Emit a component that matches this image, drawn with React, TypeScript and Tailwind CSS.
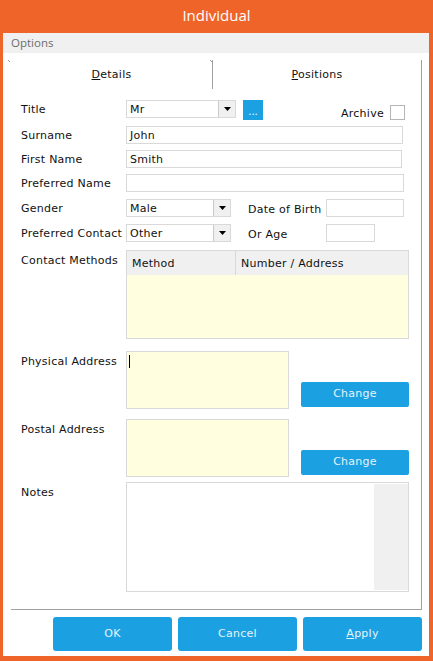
import React from "react";

const BLUE = "bg-[#1ba1e2]";

function Arrow() {
  return (
    <svg width="7" height="4" viewBox="0 0 7 4">
      <path d="M0 0h7L3.5 4z" fill="#000" />
    </svg>
  );
}

function Combo({ value, w }: { value: string; w: string }) {
  return (
    <div className={`flex h-[18px] ${w} border border-[#d9d9d9] bg-white`}>
      <div className="flex-1 pl-[3px] pt-[2px] leading-[14px] text-[#111]">{value}</div>
      <div className="w-[17px] border-l border-[#c9c9c9] bg-[#f0f0f0] flex items-center justify-center">
        <Arrow />
      </div>
    </div>
  );
}

function TextBox({ value = "", w }: { value?: string; w: string }) {
  return (
    <div className={`h-[18px] ${w} border border-[#d9d9d9] bg-white pl-[3px] pt-[2px] leading-[14px] text-[#111]`}>
      {value}
    </div>
  );
}

function Label({ text, top }: { text: string; top?: boolean }) {
  return (
    <div className={`w-[105px] shrink-0 text-[#111] whitespace-nowrap ${top ? "pt-[2px] leading-[18px]" : "pt-[2px] leading-[16px]"}`}>{text}</div>
  );
}

function Corner() {
  // little diagonal dots at the top of a tab edge
  return (
    <span className="absolute top-0 -left-[3px] block w-[3px] h-[2px]">
      <span className="absolute left-0 top-0 w-px h-px bg-[#a0a0a0]" />
      <span className="absolute left-px top-px w-px h-px bg-[#a0a0a0]" />
    </span>
  );
}

export default function App() {
  return (
    <div className="w-[433px] h-[661px] bg-[#ef6428] flex flex-col [font-family:'DejaVu_Sans',Verdana,sans-serif] text-[11px] tracking-[0.25px] overflow-hidden">
      {/* title bar */}
      <div className="h-[33px] shrink-0 flex items-center justify-center text-white text-[15px] tracking-normal [font-family:'Open_Sans',sans-serif] pb-[2px]">
        Individual
      </div>

      <div className="flex-1 ml-[3px] mr-[4px] mb-[5px] bg-white flex flex-col">
        {/* options strip */}
        <div className="h-[20px] shrink-0 bg-[#f0f0f0] pl-[8px] text-[11.5px] tracking-normal leading-[20px] text-[#6d6d6d] [font-family:'Open_Sans',sans-serif]">
          Options
        </div>

        {/* tab panel */}
        <div className="ml-[8px] mt-[7px] w-[411px] h-[550px] border-r border-b border-[#a0a0a0] flex flex-col relative">
          <Corner />
          <div className="flex h-[29px] shrink-0">
            <div className="relative w-[202px] border-r border-[#a0a0a0] flex items-center justify-center text-[#111] pt-[2px]">
              <span className="absolute top-0 right-[1px] w-px h-px bg-[#a0a0a0]" />
              <span className="absolute top-px right-0 w-px h-px bg-[#a0a0a0]" />
              <span>
                <span className="underline underline-offset-1">D</span>etails
              </span>
            </div>
            <div className="flex-1 flex items-center justify-center text-[#111] pt-[2px]">
              <span>
                <span className="underline underline-offset-1">P</span>ositions
              </span>
            </div>
          </div>

          <div className="pl-[10px] flex flex-col">
            {/* Title */}
            <div className="flex items-start h-[20px] mt-[11px]">
              <Label text="Title" />
              <Combo value="Mr" w="w-[110px]" />
              <div className={`ml-[7px] w-[20px] h-[20px] ${BLUE} flex items-end justify-center pb-[4px] text-white text-[10px] leading-[8px] tracking-normal`}>
                ...
              </div>
              <div className="ml-[78px] mt-[5px] flex items-center h-[15px]">
                <span className="text-[#111] leading-[15px] pt-[1px]">Archive</span>
                <span className="ml-[6px] w-[15px] h-[15px] border border-[#b5b5b5] bg-white" />
              </div>
            </div>

            {/* Surname */}
            <div className="flex items-center h-[18px] mt-[6px]">
              <Label text="Surname" />
              <TextBox value="John" w="w-[277px]" />
            </div>
            <div className="flex items-center h-[18px] mt-[6px]">
              <Label text="First Name" />
              <TextBox value="Smith" w="w-[276px]" />
            </div>
            <div className="flex items-center h-[18px] mt-[6px]">
              <Label text="Preferred Name" />
              <TextBox w="w-[278px]" />
            </div>

            {/* Gender */}
            <div className="flex items-center h-[18px] mt-[7px]">
              <Label text="Gender" />
              <Combo value="Male" w="w-[105px]" />
              <div className="ml-[17px] w-[78px] leading-[18px] pt-[3px] text-[#111] whitespace-nowrap">Date of Birth</div>
              <TextBox w="w-[78px]" />
            </div>
            <div className="flex items-center h-[18px] mt-[7px]">
              <Label text="Preferred Contact" />
              <Combo value="Other" w="w-[105px]" />
              <div className="ml-[17px] w-[78px] leading-[18px] pt-[3px] text-[#111]">Or Age</div>
              <TextBox w="w-[49px]" />
            </div>

            {/* Contact methods */}
            <div className="flex items-start mt-[8px]">
              <Label text="Contact Methods" top />
              <div className="w-[283px] h-[89px] border border-[#d9d9d9] flex flex-col">
                <div className="h-[24px] shrink-0 bg-[#f0f0f0] flex text-[#111]">
                  <div className="w-[109px] border-r border-[#d9d9d9] pl-[5px] pt-px leading-[23px]">Method</div>
                  <div className="flex-1 pl-[5px] pt-px leading-[23px]">Number / Address</div>
                </div>
                <div className="flex-1 bg-[#ffffdf]" />
              </div>
            </div>

            {/* Physical address */}
            <div className="flex items-start mt-[12px]">
              <Label text="Physical Address" top />
              <div className="w-[163px] h-[58px] border border-[#d9d9d9] bg-[#ffffdf] pl-[2px] pt-[3px]">
                <div className="w-px h-[13px] bg-[#000]" />
              </div>
              <div className="self-end mb-[2px] ml-[12px]">
                <div className={`w-[108px] h-[25px] ${BLUE} rounded-[2px] flex items-center justify-center text-[#e6f3fb]`}>
                  Change
                </div>
              </div>
            </div>

            {/* Postal address */}
            <div className="flex items-start mt-[10px]">
              <Label text="Postal Address" top />
              <div className="w-[163px] h-[58px] border border-[#d9d9d9] bg-[#ffffdf]" />
              <div className="self-end mb-[2px] ml-[12px]">
                <div className={`w-[108px] h-[25px] ${BLUE} rounded-[2px] flex items-center justify-center text-[#e6f3fb]`}>
                  Change
                </div>
              </div>
            </div>

            {/* Notes */}
            <div className="flex items-start mt-[5px]">
              <Label text="Notes" top />
              <div className="w-[283px] h-[110px] border border-[#d9d9d9] bg-white flex justify-end py-px">
                <div className="w-[34px] bg-[#f0f0f0]" />
              </div>
            </div>
          </div>
        </div>

        {/* dialog buttons */}
        <div className="flex gap-[6px] ml-[50px] mt-[7px]">
          <div className={`w-[119px] h-[34px] ${BLUE} rounded-[3px] flex items-center justify-center text-[#e6f3fb]`}>OK</div>
          <div className={`w-[119px] h-[34px] ${BLUE} rounded-[3px] flex items-center justify-center text-[#e6f3fb]`}>Cancel</div>
          <div className={`w-[119px] h-[34px] ${BLUE} rounded-[3px] flex items-center justify-center text-[#e6f3fb]`}>
            <span>
              <span className="underline underline-offset-1">A</span>pply
            </span>
          </div>
        </div>
      </div>
    </div>
  );
}
